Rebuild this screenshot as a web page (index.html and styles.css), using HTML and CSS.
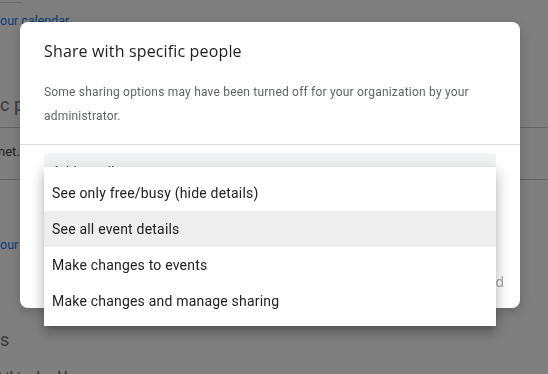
FILE: index.html
```html
<!DOCTYPE html>
<html>
<head>
<meta charset="utf-8">
<link rel="stylesheet" href="styles.css">
</head>
<body>
<div class="page">
  <div class="topbox"></div>
  <a class="link l1">our calendar</a>
  <div class="heading h1">c permissions</div>
  <div class="rule r1"></div>
  <div class="row">net.</div>
  <div class="rule r2"></div>
  <a class="link l2">our calendar</a>
  <div class="heading h2">s</div>
  <div class="row r3">t this checkbox</div>
</div>
<div class="scrim"></div>
<div class="dialog">
  <div class="dlg-head">
    <h2 class="title">Share with specific people</h2>
    <p class="note">Some sharing options may have been turned off for your organization by your administrator.</p>
  </div>
  <div class="divider"></div>
  <div class="dlg-body">
    <div class="field">Add email or name</div>
  </div>
  <div class="dlg-foot">
    <span class="btn">Cancel</span>
    <span class="btn">Send</span>
  </div>
  <ul class="menu">
    <li class="item">See only free/busy (hide details)</li>
    <li class="item active">See all event details</li>
    <li class="item">Make changes to events</li>
    <li class="item">Make changes and manage sharing</li>
  </ul>
</div>
</body>
</html>
```

FILE: styles.css
```css
html, body {
  margin: 0;
  padding: 0;
  width: 548px;
  height: 374px;
  overflow: hidden;
  background: #ffffff;
  font-family: Roboto, "Liberation Sans", sans-serif;
}
.page {
  display: flex;
  flex-direction: column;
  height: 374px;
  overflow: hidden;
  color: #3c4043;
}
.topbox {
  width: 22px;
  height: 2px;
  border-bottom: 1px solid #dadce0;
  flex: none;
}
.link {
  color: #1a73e8;
  font-size: 12.5px;
  line-height: 20px;
  height: 20px;
  white-space: nowrap;
  flex: none;
}
.l1 { margin-top: 8px; }
.heading {
  font-size: 18px;
  font-weight: 400;
  line-height: 28px;
  height: 28px;
  white-space: nowrap;
  color: #70757a;
  flex: none;
}
.h1 { margin-top: 60px; }
.rule {
  height: 1px;
  background: #c8c8c8;
  width: 100%;
  flex: none;
}
.r1 { margin-top: 8px; }
.row {
  font-size: 13px;
  line-height: 20px;
  height: 20px;
  white-space: nowrap;
  color: #3c4043;
  padding: 14px 0 17px 0;
  flex: none;
  text-indent: -2px;
}
.l2 { margin-top: 55px; }
.h2 { margin-top: 71px; }
.r3 { padding: 0; margin-top: 13px; }

.scrim {
  position: fixed;
  inset: 0;
  background: rgba(0, 0, 0, 0.5);
}
.dialog {
  position: absolute;
  left: 20px;
  top: 22px;
  width: 500px;
  height: 286px;
  background: #fff;
  border-radius: 8px;
  display: flex;
  flex-direction: column;
  box-shadow: 0 4px 12px rgba(0,0,0,0.2);
}
.dlg-head {
  padding: 17px 24px 16px 24px;
}
.title {
  margin: 0;
  font-family: "Open Sans", Roboto, sans-serif;
  font-weight: 400;
  font-size: 16px;
  line-height: 24px;
  color: #202124;
  letter-spacing: 0.15px;
}
.note {
  margin: 17px 0 0 0;
  font-size: 12px;
  line-height: 24px;
  color: #5f6368;
  letter-spacing: 0.2px;
}
.divider {
  height: 1px;
  background: #dadce0;
  flex: none;
}
.dlg-body {
  padding: 8px 24px 0 24px;
  flex: 1;
}
.field {
  height: 44px;
  background: #f1f3f4;
  border-radius: 4px 4px 0 0;
  padding: 9px 8px 0 8px;
  font-size: 14px;
  line-height: 20px;
  color: #3c4043;
  box-sizing: border-box;
}
.dlg-foot {
  display: flex;
  justify-content: flex-end;
  gap: 8px;
  padding: 0 8px 8px 8px;
}
.btn {
  height: 36px;
  line-height: 36px;
  padding: 0 8px;
  font-size: 14px;
  font-weight: 500;
  color: #9aa0a6;
  font-family: "Open Sans", Roboto, sans-serif;
}
.menu {
  position: absolute;
  left: 24px;
  top: 145px;
  width: 452px;
  margin: 0;
  padding: 8px 0 7px 0;
  list-style: none;
  background: #fff;
  box-shadow: 0 5px 5px -3px rgba(0,0,0,0.2), 0 8px 10px 1px rgba(0,0,0,0.14), 0 3px 14px 2px rgba(0,0,0,0.12);
}
.item {
  height: 36px;
  line-height: 36px;
  padding: 0 8px;
  font-size: 14px;
  letter-spacing: 0.2px;
  color: #202124;
  white-space: nowrap;
}
.item.active {
  background: #eeeeee;
}
```
